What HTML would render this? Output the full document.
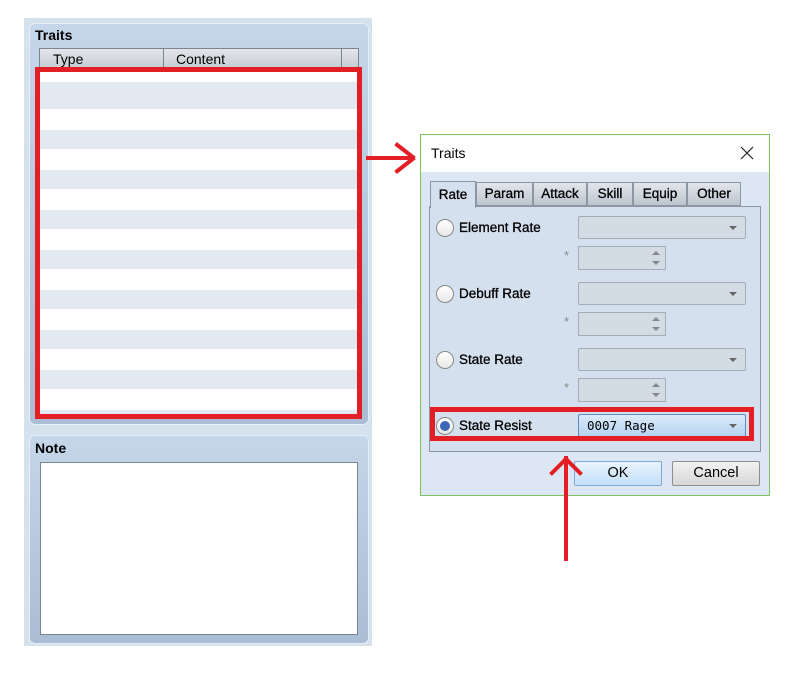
<!DOCTYPE html>
<html><head><style>
*{margin:0;padding:0;box-sizing:border-box}
body{width:794px;height:673px;background:#fff;position:relative;overflow:hidden;font-family:"Liberation Sans","DejaVu Sans",sans-serif;font-size:13px;color:#000}
div{position:absolute}
.grp{border-radius:6px;background:linear-gradient(#c5d6ea,#aabdd4);border:1px solid #e6eef8}
.lbl{font-weight:bold;font-size:14px}
.combo{background:#d3dbe5;border:1px solid #a4acb6;border-radius:2px;height:23px}
.combo:after{content:"";position:absolute;right:8px;top:9px;border-left:4px solid transparent;border-right:4px solid transparent;border-top:4px solid #666}
.spin{background:#d3dbe5;border:1px solid #a4acb6;height:24px;width:88px}
.spin:before{content:"";position:absolute;right:5px;top:4px;border-left:4px solid transparent;border-right:4px solid transparent;border-bottom:4px solid #888}
.spin:after{content:"";position:absolute;right:5px;top:14px;border-left:4px solid transparent;border-right:4px solid transparent;border-top:4px solid #888}
.radio{width:18px;height:18px;border-radius:50%;border:1px solid #888;background:linear-gradient(#fff,#e8e8e8)}
.rl{font-size:13.5px;-webkit-text-stroke:0.3px #000}
.tab{top:182px;height:24px;background:linear-gradient(#e2e6ea,#bcc5cf);border:1px solid #8d97a3;font-size:13.5px;text-align:center;line-height:22px;-webkit-text-stroke:0.3px #000}
.red{border:5px solid #e31e24}
.ar{background:#e31e24}
</style></head><body>
<div style="left:24px;top:18px;width:348px;height:628px;background:#d6e1ee"></div>
<div class="grp" style="left:29px;top:23px;width:340px;height:402px"></div>
<div class="lbl" style="left:35px;top:27px">Traits</div>
<div style="left:39px;top:48px;width:320px;height:370px;border:1px solid #7b8590;background:repeating-linear-gradient(#e3e9f0 0 19px,#fff 19px 40px);background-position:0 41px"></div>
<div style="left:39px;top:48px;width:320px;height:21px;background:linear-gradient(#e3e6ea,#c7ccd2);border:1px solid #7b8590"></div>
<div style="left:163px;top:48px;width:1px;height:20px;background:#7b8590"></div>
<div style="left:341px;top:48px;width:1px;height:20px;background:#7b8590"></div>
<div style="left:53px;top:51px;font-size:14px">Type</div>
<div style="left:176px;top:51px;font-size:14px">Content</div>
<div class="red" style="left:35px;top:67px;width:327px;height:352px"></div>
<div class="grp" style="left:29px;top:435px;width:340px;height:209px"></div>
<div class="lbl" style="left:35px;top:440px">Note</div>
<div style="left:40px;top:462px;width:318px;height:173px;background:#fff;border:1px solid #7b8590"></div>

<div class="ar" style="left:366px;top:156px;width:46px;height:4px"></div>
<div class="ar" style="left:393px;top:149px;width:24px;height:4px;transform:rotate(38deg)"></div>
<div class="ar" style="left:393px;top:163px;width:24px;height:4px;transform:rotate(-38deg)"></div>

<div style="left:420px;top:134px;width:350px;height:362px;border:1px solid #7dc165;background:#dde7f3"></div>
<div style="left:421px;top:135px;width:348px;height:37px;background:#fff"></div>
<div style="left:431px;top:145px;font-size:14px">Traits</div>
<svg style="position:absolute;left:740px;top:146px" width="14" height="14"><path d="M1 1L13 13M13 1L1 13" stroke="#222" stroke-width="1.2"/></svg>
<div style="left:429px;top:206px;width:332px;height:246px;border:1px solid #8d97a3;background:#d5e0ee"></div>
<div class="tab" style="left:476px;width:57px">Param</div>
<div class="tab" style="left:533px;width:54px">Attack</div>
<div class="tab" style="left:587px;width:46px">Skill</div>
<div class="tab" style="left:633px;width:54px">Equip</div>
<div class="tab" style="left:687px;width:54px">Other</div>
<div class="tab" style="left:430px;top:181px;width:46px;height:27px;background:#d5e0ee;border-bottom:none;line-height:26px">Rate</div>

<div class="radio" style="left:436px;top:219px"></div><div class="rl" style="left:459px;top:220px">Element Rate</div>
<div class="combo" style="left:578px;top:216px;width:168px"></div>
<div style="left:564px;top:248px;color:#888">*</div><div class="spin" style="left:578px;top:246px"></div>
<div class="radio" style="left:436px;top:285px"></div><div class="rl" style="left:459px;top:286px">Debuff Rate</div>
<div class="combo" style="left:578px;top:282px;width:168px"></div>
<div style="left:564px;top:314px;color:#888">*</div><div class="spin" style="left:578px;top:312px"></div>
<div class="radio" style="left:436px;top:351px"></div><div class="rl" style="left:459px;top:352px">State Rate</div>
<div class="combo" style="left:578px;top:348px;width:168px"></div>
<div style="left:564px;top:380px;color:#888">*</div><div class="spin" style="left:578px;top:378px"></div>
<div class="radio" style="left:436px;top:417px"><div style="left:3px;top:3px;width:10px;height:10px;border-radius:50%;background:#3d68b8"></div></div>
<div class="rl" style="left:459px;top:418px">State Resist</div>
<div class="combo" style="left:578px;top:414px;width:168px;background:linear-gradient(#dcebfb,#b5d3f1);border-color:#5b8bc8"></div>
<div style="left:587px;top:418px;font-family:'DejaVu Sans Mono','Liberation Mono',monospace;font-size:12.5px">0007 Rage</div>
<div class="red" style="left:430px;top:407px;width:324px;height:34px"></div>

<div style="left:574px;top:461px;width:88px;height:25px;border:1px solid #7ea9d6;border-radius:2px;background:linear-gradient(#eaf4fd,#c4e0fa);text-align:center;line-height:23px;font-size:14.5px">OK</div>
<div style="left:672px;top:461px;width:88px;height:25px;border:1px solid #8e8e8e;border-radius:2px;background:linear-gradient(#f2f2f2,#d6d6d6);text-align:center;line-height:23px;font-size:14.5px">Cancel</div>

<div class="ar" style="left:564px;top:456px;width:4px;height:105px"></div>
<div class="ar" style="left:547px;top:464px;width:24px;height:4px;transform:rotate(-45deg)"></div>
<div class="ar" style="left:561px;top:464px;width:24px;height:4px;transform:rotate(45deg)"></div>
</body></html>
